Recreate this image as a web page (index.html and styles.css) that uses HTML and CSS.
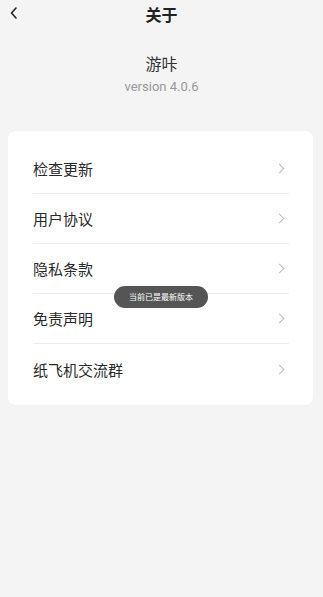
FILE: index.html
```html
<!DOCTYPE html>
<html lang="zh">
<head>
    <meta charset="UTF-8">
    <title>关于</title>
    <link rel="stylesheet" href="styles.css">
</head>
<body>

<div class="page">
    <div class="nav">
        <span class="nav__back">
            <svg width="10" height="14" viewBox="0 0 10 14"><path d="M7 2 L2.5 7 L7 12" fill="none" stroke="#222" stroke-width="1.6" stroke-linecap="round" stroke-linejoin="round"/></svg>
        </span>
        <h1 class="nav__title">关于</h1>
    </div>

    <div class="app">
        <div class="app__name">游咔</div>
        <div class="app__version">version 4.0.6</div>
    </div>

    <div class="card">
        <div class="card__row"><span>检查更新</span><i class="card__arrow"></i></div>
        <div class="card__row"><span>用户协议</span><i class="card__arrow"></i></div>
        <div class="card__row"><span>隐私条款</span><i class="card__arrow"></i></div>
        <div class="card__row"><span>免责声明</span><i class="card__arrow"></i></div>
        <div class="card__row"><span>纸飞机交流群</span><i class="card__arrow"></i></div>
    </div>

    <div class="toast">当前已是最新版本</div>
</div>

</body>
</html>
```

FILE: styles.css
```css
* {
    box-sizing: border-box;
    margin: 0;
    padding: 0;
}

body {
    background: #f4f4f4;
    font-family: "Noto Sans CJK SC", "Noto Sans", sans-serif;
    color: #222;
}

.page {
    position: relative;
    min-height: 597px;
}

.nav {
    position: relative;
    height: 28px;
    display: flex;
    align-items: center;
    justify-content: center;
}
.nav__back {
    position: absolute;
    left: 9px;
    top: 6px;
    display: flex;
}
.nav__title {
    font-size: 16px;
    font-weight: 700;
    line-height: 28px;
}

.app {
    padding-top: 23px;
    text-align: center;
    height: 103px;
}
.app__name {
    font-size: 16px;
    line-height: 24px;
    color: #333;
}
.app__version {
    font-family: Roboto, "Noto Sans", sans-serif;
    font-size: 13px;
    line-height: 20px;
    margin-top: 2px;
    color: #999;
}

.card {
    margin: 0 10px 0 8px;
    background: #fff;
    border-radius: 8px;
    padding: 13px 24px 11px 25px;
}
.card__row {
    height: 50px;
    display: flex;
    align-items: center;
    justify-content: space-between;
    font-size: 15px;
    color: #2a2a2a;
    border-bottom: 1px solid #ececec;
}
.card__row:last-child {
    border-bottom: none;
}
.card__arrow {
    width: 7px;
    height: 7px;
    border-top: 1px solid #bbb;
    border-right: 1px solid #bbb;
    transform: rotate(45deg);
    margin-right: 6px;
}

.toast {
    position: absolute;
    left: 114px;
    top: 286px;
    width: 94px;
    height: 22px;
    line-height: 22px;
    border-radius: 11px;
    background: #555;
    color: #fff;
    font-size: 8px;
    text-align: center;
}
```
